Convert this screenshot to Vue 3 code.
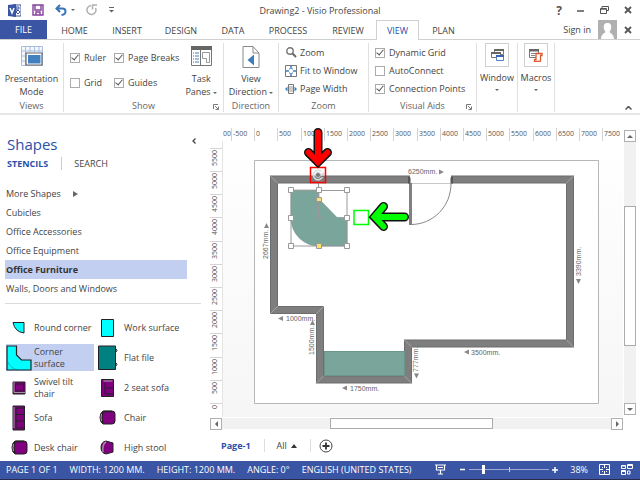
<script setup>
import { ref } from 'vue'

const tabs = [
  { name: 'HOME', w: 'w-home' },
  { name: 'INSERT', w: 'w-insert' },
  { name: 'DESIGN', w: 'w-design' },
  { name: 'DATA', w: 'w-data' },
  { name: 'PROCESS', w: 'w-process' },
  { name: 'REVIEW', w: 'w-review' },
]
const showOptions = ref([
  { id: 'ruler', label: 'Ruler', on: true },
  { id: 'breaks', label: 'Page Breaks', on: true },
  { id: 'grid', label: 'Grid', on: false },
  { id: 'guides', label: 'Guides', on: true },
])
const aids = ref([
  { id: 'dyn', label: 'Dynamic Grid', on: true },
  { id: 'auto', label: 'AutoConnect', on: false },
  { id: 'conn', label: 'Connection Points', on: true },
])
const stencils = ['More Shapes', 'Cubicles', 'Office Accessories', 'Office Equipment', 'Office Furniture', 'Walls, Doors and Windows']
const selected = ref('Office Furniture')
const masters = ['Round corner', 'Work surface', 'Corner surface', 'Flat file', 'Swivel tilt chair', '2 seat sofa', 'Sofa', 'Chair', 'Desk chair', 'High stool']
const master = ref('Corner surface')
const zoom = ref(38)

// Distance between two ruler marks (500 mm) at the current zoom level
const step = 23.2
const hRuler = Array.from({ length: 17 }, (_, i) => ({ label: String((i - 1) * 500), x: Math.round(8 + i * step) }))
const vRuler = Array.from({ length: 12 }, (_, i) => ({ label: String(i * 500), y: Math.round(262 - i * step) }))
const status = ['PAGE 1 OF 1', 'WIDTH: 1200 MM.', 'HEIGHT: 1200 MM.', 'ANGLE: 0°', 'ENGLISH (UNITED STATES)']
</script>

<template>
  <div class="app">
    <header class="titlebar">
      <div class="quick">
        <svg width="13" height="13" viewBox="0 0 13 13" aria-hidden="true">
          <path d="M5 1h8v11H5z" fill="#fff" stroke="#3955a3" />
          <path d="M8 3h3v2H8zM9 5v2M8 8l2-2 2 2-2 2z" fill="none" stroke="#3955a3" />
          <path d="M0 1l8-1v13l-8-1z" fill="#3955a3" />
          <path d="M2 4l2 5 2-5" fill="none" stroke="#fff" stroke-width="1.5" />
        </svg>
        <button class="plain" aria-label="Save">
          <svg width="12" height="12" viewBox="0 0 12 12"><path d="M1 1h10v10H1zM3 1v5h6V1M4 11V8h4v3" fill="none" stroke="#84419b" stroke-width="1.4" /></svg>
        </button>
        <button class="plain undo" aria-label="Undo">
          <svg width="20" height="12" viewBox="0 0 20 12">
            <path d="M5 1L1.500 4.500 5 8M2 4.500h5.500q3 0 3 3t-4 3.500" fill="none" stroke="#3a74b8" stroke-width="2" />
            <path d="M16 5h4l-2 2z" fill="#666" />
          </svg>
        </button>
        <button class="plain" aria-label="Repeat">
          <svg width="12" height="12" viewBox="0 0 12 12"><path d="M5 1.500A4.500 4.500 0 1 0 9.500 4M6.500 5.500V1H11" fill="none" stroke="#b0b0b0" stroke-width="1.500" /></svg>
        </button>
        <button class="plain" aria-label="Customize">
          <svg width="5" height="6" viewBox="0 0 5 6"><path d="M0 .5h5" stroke="#666" /><path d="M0 3h5L2.500 5.500z" fill="#666" /></svg>
        </button>
      </div>
      <h1>Drawing2 - Visio Professional</h1>
      <div class="winbtns">
        <button class="plain help" aria-label="Help">?</button>
        <button class="plain" aria-label="Minimize"><svg width="8" height="8" viewBox="0 0 8 8"><path d="M0 5h7" stroke="#555" stroke-width="1.500" /></svg></button>
        <button class="plain" aria-label="Restore"><svg width="9" height="8" viewBox="0 0 9 8"><path d="M.5 2.500h6v5h-6zM2 2V.5h6.500v4H7M.5 3.200h6" fill="none" stroke="#555" /></svg></button>
        <button class="plain" aria-label="Close"><svg width="8" height="8" viewBox="0 0 8 8"><path d="M1 1l6 6M7 1L1 7" stroke="#555" stroke-width="1.800" /></svg></button>
      </div>
    </header>

    <nav class="tabs">
      <button class="file">FILE</button>
      <button v-for="t in tabs" :key="t.name" class="tab" :class="t.w">{{ t.name }}</button>
      <button class="tab active">VIEW</button>
      <button class="tab w-plan">PLAN</button>
      <div class="account">
        <a href="#">Sign in</a>
        <svg width="19" height="19" viewBox="0 0 19 19" aria-hidden="true">
          <path d="M0 0h19v19H0z" fill="#b0b0b0" />
          <path d="M9.500 3c3 0 3.800 2 3.800 4.200S12 11 11.500 12c0 1 4.500 1.500 4.500 7H3c0-5.500 4.500-6 4.500-7C7 11 5.700 9.400 5.700 7.200S6.500 3 9.500 3z" fill="#fff" />
        </svg>
        <button class="plain" aria-label="Close document"><svg width="8" height="8" viewBox="0 0 8 8"><path d="M1 1l6 6M7 1L1 7" stroke="#555" stroke-width="1.800" /></svg></button>
      </div>
    </nav>

    <section class="ribbon">
      <div class="group g-views">
        <button class="big">
          <svg width="22" height="20" viewBox="0 0 22 20">
            <path d="M.5.500h21v19H.5z" fill="#f4f7fc" stroke="#a9bde0" />
            <path d="M4.500 0v20M9 0v6M13.500 0v6M18 0v6M0 5h22M0 10h5M0 15h5" fill="none" stroke="#a9bde0" />
            <path d="M5 7h16v12H5z" fill="#fff" stroke="#666" stroke-width="1.200" />
            <path d="M7 9h12.500v8.500H7z" fill="#4280c0" />
          </svg>
          <span>Presentation<br>Mode</span>
        </button>
        <h2>Views</h2>
      </div>
      <div class="group g-show">
        <div class="show-body">
          <div class="checks">
            <label v-for="o in showOptions" :key="o.id"><input v-model="o.on" type="checkbox">{{ o.label }}</label>
          </div>
          <button class="big">
            <svg width="21" height="20" viewBox="0 0 21 20">
              <path d="M.5.500h20v19H.5z" fill="#fff" stroke="#777" />
              <path d="M0 0h21v4H0z" fill="#666" />
              <path d="M9.500 4v15" stroke="#777" />
              <path d="M2 7h1M2 10h1M2 13h1M2 16h1" stroke="#666" />
              <path d="M4 7h4M4 10h4M4 13h4M4 16h4" stroke="#4280c0" />
              <path d="M11.500 6.500h7v10h-3v-4h-4z" fill="none" stroke="#999" />
            </svg>
            <span>Task<br>Panes <i class="caret"></i></span>
          </button>
        </div>
        <h2>Show</h2>
        <button class="plain launcher" aria-label="Show settings"><svg width="6" height="6" viewBox="0 0 6 6"><path d="M.5 5V.5H5M2 2l3 3M5.500 2.500v3h-3" fill="none" stroke="#777" /></svg></button>
      </div>
      <div class="group g-dir">
        <button class="big">
          <svg width="18" height="22" viewBox="0 0 18 22">
            <path d="M1 .5h10L17 7v14.500H1zM11 .5V7h6" fill="#fff" stroke="#888" />
            <path d="M12 8.500v11L5.500 14z" fill="#3f7dbd" />
          </svg>
          <span>View<br>Direction <i class="caret"></i></span>
        </button>
        <h2>Direction</h2>
      </div>
      <div class="group g-zoom">
        <div class="stack">
          <button class="row"><svg width="12" height="12" viewBox="0 0 12 12"><circle cx="5" cy="4" r="3.200" fill="#fff" stroke="#777" stroke-width="1.400" /><path d="M7.500 6.500L11 10" stroke="#666" stroke-width="2" /></svg>Zoom</button>
          <button class="row"><svg width="12" height="12" viewBox="0 0 12 12"><path d="M.5.500h11v11H.5z" fill="#fff" stroke="#777" /><path d="M6 1v3M6 8v3M1 6h3M8 6h3" stroke="#3f7dbd" stroke-width="1.500" /><path d="M4 4h1M7 4h1M4 8h1M7 8h1" stroke="#3f7dbd" /></svg>Fit to Window</button>
          <button class="row"><svg width="12" height="12" viewBox="0 0 12 12"><path d="M3.500 1.500h5v9h-5z" fill="#fff" stroke="#777" /><path d="M4 4h4M4 6h4M4 8h4" stroke="#999" /><path d="M2.500 3.500v5L0 6zM9.500 3.500v5L12 6z" fill="#3f7dbd" /></svg>Page Width</button>
        </div>
        <h2>Zoom</h2>
      </div>
      <div class="group g-aids">
        <div class="stack">
          <label v-for="o in aids" :key="o.id"><input v-model="o.on" type="checkbox">{{ o.label }}</label>
        </div>
        <h2>Visual Aids</h2>
        <button class="plain launcher" aria-label="Visual aid settings"><svg width="6" height="6" viewBox="0 0 6 6"><path d="M.5 5V.5H5M2 2l3 3M5.500 2.500v3h-3" fill="none" stroke="#777" /></svg></button>
      </div>
      <div class="group g-win">
        <button class="big boxed">
          <span class="box"><svg width="13" height="12" viewBox="0 0 13 12">
            <path d="M3.500.500h9v5h-9z" fill="#fff" stroke="#777" /><path d="M3 0h10v2H3z" fill="#666" />
            <path d="M.5 3.500h9v5h-9z" fill="#fff" stroke="#777" /><path d="M0 3h10v2H0z" fill="#666" />
            <path d="M5.500 6.500h7v5h-7z" fill="#fff" stroke="#4f81c4" /><path d="M5 6h8v2H5z" fill="#3a66b5" />
          </svg></span>
          <span>Window</span><i class="caret"></i>
        </button>
      </div>
      <div class="group g-mac">
        <button class="big boxed">
          <span class="box"><svg width="14" height="13" viewBox="0 0 14 13">
            <path d="M.5.500h9v8h-9z" fill="#fff" stroke="#777" /><path d="M0 0h10v2.500H0z" fill="#666" /><path d="M2 4.500h6M2 6.500h4" stroke="#888" />
            <path d="M7 4.500h6v2h-1.500v5q0 1-1 1h-5v-2h1.500z" fill="#fff" stroke="#e0552b" stroke-width="1.300" />
          </svg></span>
          <span>Macros</span><i class="caret"></i>
        </button>
      </div>
      <button class="plain collapse" aria-label="Collapse the ribbon"><svg width="7" height="4" viewBox="0 0 7 4"><path d="M.5 3.500l3-3 3 3" fill="none" stroke="#555" stroke-width="1.500" /></svg></button>
    </section>

    <main class="body">
      <aside class="shapes">
        <div class="shapes-head">
          <h2>Shapes</h2>
          <button class="plain" aria-label="Collapse pane"><svg width="4" height="6" viewBox="0 0 4 6"><path d="M3.500.500L1 3l2.500 2.500" fill="none" stroke="#444" stroke-width="1.300" /></svg></button>
        </div>
        <div class="modes">
          <button class="plain on">STENCILS</button>
          <button class="plain">SEARCH</button>
        </div>
        <ul class="stencils">
          <li v-for="s in stencils" :key="s">
            <button :class="{ sel: s === selected }" @click="selected = s">{{ s }}<i v-if="s === 'More Shapes'" class="more"></i></button>
          </li>
        </ul>
        <div class="masters">
          <button v-for="(m, i) in masters" :key="m" :class="{ sel: m === master }" @click="master = m">
            <svg width="26" height="26" viewBox="0 0 26 26" aria-hidden="true">
              <path v-if="i === 0" d="M7 7.500h11v10.500q-9-1-11-10.500z" fill="#0ff" stroke="#222" />
              <path v-if="i === 1" d="M5.500 4.500h12v17h-12z" fill="#0ff" stroke="#222" />
              <g v-if="i === 2"><path d="M1 1h9.500v9l5 5h9.500v10H1z" fill="#0ff" stroke="#222" stroke-width="1.200" /><path d="M1 14q2 9 11 11" fill="none" stroke="#078" stroke-dasharray="1 1" /></g>
              <g v-if="i === 3"><path d="M2.500 1h17v23.500h-17z" fill="#008080" stroke="#222" /><path d="M20 4q2 1 0 3M20 18q2 1 0 3" fill="none" stroke="#222" /></g>
              <g v-if="i === 4"><path d="M7 7h12v12H7z" fill="#800080" stroke="#222" /><path d="M8 7v10.500H19" fill="none" stroke="#999" /><path d="M9.500 9h8v7h-8z" fill="#800080" stroke="#222" /></g>
              <g v-if="i === 5"><path d="M5.500 4.500h12v17h-12z" fill="#800080" stroke="#222" /><path d="M7.500 6h9" stroke="#aaa" /><path d="M9 8v11M9.500 13h8M9.500 19h8" fill="none" stroke="#222" /></g>
              <g v-if="i === 6"><path d="M7 1h11.500v24H7z" fill="#800080" stroke="#222" /><path d="M8 2v21" stroke="#999" /><path d="M10 3v20M10 9.500h8M10 16h8M10 23h8M10 3h8" fill="none" stroke="#222" /></g>
              <g v-if="i === 7 || i === 8" :transform="i === 7 ? 'translate(-2 0)' : ''"><path d="M9 6h9q3 0 3 3v7q0 3-3 3H9q-3-2-3-6.500T9 6z" fill="#800080" stroke="#222" /><path d="M9 6.500q-2 6 0 12M10 6.500h8" fill="none" stroke="#222" stroke-width="1.400" /><path d="M7.500 9q-1 4 0 7" fill="none" stroke="#aaa" /></g>
              <g v-if="i === 9" transform="translate(-2 0)"><path d="M12 6l7 2v9l-7 2q-5-1-5-6.500T12 6z" fill="#800080" stroke="#222" /><path d="M12 7q-4 2-3 10" fill="none" stroke="#999" stroke-width="1.500" /></g>
            </svg>
            <span>{{ m }}</span>
          </button>
        </div>
      </aside>

      <section class="work">
        <svg class="hruler" viewBox="0 0 400 14" preserveAspectRatio="xMinYMin meet" aria-label="Horizontal ruler">
          <path d="M0 13.500h400" stroke="#ddd" />
          <text x="0" y="8">00</text>
          <g v-for="t in hRuler" :key="t.label"><path :d="`M${t.x}.5 0v13`" stroke="#d4d4d4" /><text :x="t.x + 2" y="8">{{ t.label }}</text></g>
        </svg>
        <svg class="vruler" viewBox="0 0 13 276" aria-label="Vertical ruler">
          <path d="M12.500 0v276" stroke="#e4e4e4" />
          <g v-for="t in vRuler" :key="t.label"><path :d="`M0 ${t.y}.5h12`" stroke="#d4d4d4" /><text :transform="`translate(7 ${t.y + 2}) rotate(-90)`" text-anchor="end">{{ t.label }}</text></g>
        </svg>
        <svg class="canvas" viewBox="223 141 400 276" preserveAspectRatio="xMinYMin meet" role="img" aria-label="Floor plan">
          <path d="M254.500 160.500h344v243h-344z" fill="#fff" stroke="#b4b6ba" />
          <path d="M410 183.500h41" stroke="#c8c8c8" />
          <g fill="none">
            <path d="M410 179.500H274V310h46v69.500h88v-36h162v-164H451" stroke="#6d6d6d" stroke-width="8" />
            <path d="M410 179.500H274V310h46v69.500h88v-36h162v-164H451" stroke="#7e7e7e" stroke-width="6" />
            <path d="M270 175.500l8 8M574 175.500l-8 8M270 314l8-8M316 314l8-8M316 383.500l8-8M412 383.500l-8-8M404 339.500l8 8M574 347.500l-8-8" stroke="#b5b5b5" stroke-width=".7" />
            <path d="M410.500 183v42" stroke="#808080" stroke-width="3" />
            <path d="M411 224.500c22 0 40-18 40-41" stroke="#888" />
          </g>
          <path d="M408 176.500q3 0 2.500 3v4H408zM453 176.500q-3 0-2.500 3v4h2.500z" fill="#555" />
          <path d="M324 351h81v25h-81z" fill="#7aa59b" />
          <path d="M324 351.500h81M404.500 352v24M324.500 352v24M324 375.500h81" stroke="#6b968c" />
          <path d="M291 190h28v9l18 18.500h10V246h-28c-16 0-28-13-28-28z" fill="#7aa59b" stroke="#6d9389" stroke-width=".6" />
          <g stroke="#999" fill="none">
            <path d="M291 190.500h56V246h-56z" />
            <path d="M318.500 183v34" /><circle cx="318.500" cy="217.500" r="2" />
          </g>
          <g fill="#fff" stroke="#999">
            <path d="M288.500 187.500h5v5h-5zM316.500 187.500h5v5h-5zM344.500 187.500h5v5h-5zM288.500 215.500h5v5h-5zM344.500 215.500h5v5h-5zM288.500 243.500h5v5h-5zM344.500 243.500h5v5h-5z" />
            <path d="M316.500 197.500h5v4h-5zM316.500 243.500h5v5h-5z" fill="#fbe26a" />
          </g>
          <path d="M321.500 171.500a4.800 4.800 0 1 0 1 5.500" fill="none" stroke="#ddd" stroke-width="1.500" />
          <path d="M319.500 175.500h4.500v-4z" fill="#ddd" />
          <circle cx="318" cy="175" r="2.500" fill="#777" stroke="#ccc" />
          <path d="M310.500 167.500h15v15h-15z" fill="none" stroke="#f00" stroke-width="1.500" />
          <path d="M354 210.500h14.500v14H354z" fill="#fff" stroke="#0f0" stroke-width="1.500" />
          <g class="dims">
            <text x="408" y="174">6250mm.</text><path d="M439 169.500v5l5-2.500z" />
            <text x="286" y="321">1000mm.</text><path d="M283 316v5l-5-2.500z" />
            <text x="350" y="391">1750mm.</text><path d="M347 385.500v5l-5-2.500z" />
            <text x="471" y="355">3500mm.</text><path d="M469 349.500v5l-5-2.500z" />
            <text transform="translate(268 259) rotate(-90)">2667mm.</text><path d="M264 228h5l-2.500-5z" />
            <text transform="translate(314 355) rotate(-90)">1500mm.</text><path d="M310 325h5l-2.500-5z" />
            <text transform="translate(418 372) rotate(-90)">777mm.</text><path d="M414 373.500h5l-2.500 5z" />
            <text transform="translate(581 276) rotate(-90)">3390mm.</text><path d="M576 279h5l-2.500 5z" />
          </g>
          <g class="arrow">
            <path class="outer" d="M318 132.500V160M308.500 152.500l9.500 9.500 9.500-9.500" />
            <path class="red" d="M318 132.500V160M308.500 152.500l9.500 9.500 9.500-9.500" />
            <path class="outer" d="M404.500 217H376M383.500 206.500L374.500 217l9 9.500" />
            <path class="green" d="M404.500 217H376M383.500 206.500L374.500 217l9 9.500" />
          </g>
        </svg>
        <div class="vscroll">
          <button aria-label="Scroll up"><i class="tri up"></i></button>
          <div class="trough"><div class="thumb"></div></div>
          <button aria-label="Scroll down"><i class="tri down"></i></button>
        </div>
        <div class="hscroll">
          <button aria-label="Scroll left"><i class="tri left"></i></button>
          <div class="trough"><div class="thumb"></div></div>
          <button aria-label="Scroll right"><i class="tri right"></i></button>
        </div>
        <div class="pages">
          <button class="plain current">Page-1</button>
          <button class="plain all">All <i class="tri up wide"></i></button>
          <button class="plain add" aria-label="Insert page"><svg width="14" height="14" viewBox="0 0 14 14"><circle cx="7" cy="7" r="6" fill="#fff" stroke="#444" /><path d="M7 3.500v7M3.500 7h7" stroke="#333" stroke-width="1.800" /></svg></button>
        </div>
      </section>
    </main>

    <footer class="status">
      <span v-for="s in status" :key="s">{{ s }}</span>
      <div class="zoombar">
        <button class="plain present" aria-label="Presentation mode"><svg width="11" height="11" viewBox="0 0 11 11"><path d="M0 1h11M1.500 1v5h8V1M3 3.500h5M5.500 6v4M3 10h5" fill="none" stroke="#fff" stroke-width="1.200" /></svg></button>
        <button class="plain" aria-label="Zoom out"><svg width="5" height="5" viewBox="0 0 5 5"><path d="M0 2.500h5" stroke="#fff" stroke-width="1.500" /></svg></button>
        <input v-model="zoom" type="range" min="1" max="230" aria-label="Zoom level">
        <button class="plain" aria-label="Zoom in"><svg width="6" height="6" viewBox="0 0 6 6"><path d="M0 3h6M3 0v6" stroke="#fff" stroke-width="1.500" /></svg></button>
        <button class="plain pct">{{ zoom }}%</button>
        <button class="plain" aria-label="Fit page"><svg width="11" height="11" viewBox="0 0 11 11"><path d="M.5.500h10v10H.5zM5.500 1v3M5.500 7v3M1 5.500h3M7 5.500h3M3 3l1 1M8 3L7 4M3 8l1-1M8 8L7 7" fill="none" stroke="#fff" /></svg></button>
        <button class="plain" aria-label="Switch windows"><svg width="12" height="11" viewBox="0 0 12 11"><path d="M.5 1.500h4v3h-4zM6.500.500h5v4h-5zM.5 6.500h4v4h-4zM6.500 10v-3H9v3zM.5 2h4M6.500 1.500h5M.5 7.500h4" fill="none" stroke="#fff" /></svg></button>
      </div>
    </footer>
  </div>
</template>

<style>
body { margin: 0; background: #fff; }
</style>

<style scoped>
.app { display: flex; flex-direction: column; min-height: 100vh; background: #fff; color: #444; font: 9px/13px "Open Sans", "Noto Sans", sans-serif; overflow: hidden; }
* { box-sizing: border-box; }
button { font: inherit; color: inherit; background: none; border: 0; padding: 0; }
h1, h2, ul { margin: 0; padding: 0; font: inherit; list-style: none; }
svg { display: block; flex: none; }
.plain { display: flex; align-items: center; }

.titlebar { display: grid; grid-template-columns: 1fr auto 1fr; align-items: center; height: 20px; padding: 0 8px; }
.quick { display: flex; align-items: center; gap: 11px; }
.winbtns { display: flex; justify-content: flex-end; align-items: center; gap: 15px; }
.help { font-size: 12px; font-weight: 700; color: #555; }

.tabs { display: flex; align-items: stretch; height: 20px; border-bottom: 1px solid #d0d0d0; }
.file { width: 47px; background: #3955a3; color: #fff; }
.tab { border: 1px solid transparent; border-bottom: 0; padding: 0; white-space: nowrap; }
.w-home { width: 55px; }
.w-insert { width: 50px; }
.w-design { width: 58px; }
.w-data { width: 46px; }
.w-process { width: 64px; }
.w-review { width: 56px; }
.w-plan { width: 49px; }
.active { width: 43px; margin-bottom: -1px; background: #fff; border-color: #d0d0d0; color: #2b4fb0; }
.account { display: flex; align-items: center; gap: 7px; margin-left: auto; padding-right: 8px; }
.account a { color: inherit; text-decoration: none; }

.ribbon { display: flex; height: 75px; padding: 3px 0 1px; border-bottom: 2px solid #e6e6e6; }
.group { position: relative; display: flex; flex-direction: column; border-right: 1px solid #e0e0e0; padding-top: 3px; }
.group h2 { margin-top: auto; height: 12px; line-height: 12px; text-align: center; color: #666; }
.g-views { width: 64px; }
.g-show { width: 160px; }
.g-dir { width: 55px; }
.g-zoom { width: 90px; }
.g-aids { width: 108px; }
.g-win { width: 41px; }
.g-mac { width: 37px; }
.big { display: flex; flex-direction: column; align-items: center; gap: 6px; }
.big span { line-height: 13px; white-space: nowrap; }
.g-dir .big { gap: 4px; }
.caret { display: inline-block; border: 2px solid transparent; border-top-color: #666; border-bottom: 0; vertical-align: middle; }
.show-body { display: flex; justify-content: space-between; padding: 0 6px; }
.checks { display: grid; grid-template-columns: 44px auto; row-gap: 12px; align-content: start; padding-top: 5px; }
.stack { display: flex; flex-direction: column; gap: 5px; padding-left: 6px; }
.row { display: flex; align-items: center; gap: 3px; height: 13px; }
label { display: flex; align-items: center; gap: 4px; height: 13px; white-space: nowrap; }
label input { appearance: none; width: 10px; height: 10px; margin: 0; border: 1px solid #ababab; background: #fff; display: grid; place-content: center; }
label input:checked::after { content: ""; width: 3px; height: 6px; border: solid #555; border-width: 0 1px 1px 0; transform: rotate(40deg); margin-bottom: 2px; }
.launcher { position: absolute; right: 4px; bottom: 2px; }
.g-win, .g-mac { padding-top: 0; }
.boxed { gap: 4px; }
.box { display: grid; place-content: center; width: 24px; height: 24px; border: 1px solid #d0d0d0; }
.boxed .caret { margin-top: 1px; }
.collapse { margin: auto 8px 2px auto; }

.body { display: flex; flex: 1; }
.shapes { width: 202px; padding: 18px 1px 0 5px; flex: none; }
.shapes-head { display: flex; justify-content: space-between; padding: 0 5px 0 2px; height: 22px; }
.shapes-head h2 { font-size: 15px; line-height: 22px; color: #2b4fa8; }
.shapes-head button { align-self: flex-start; padding-top: 5px; }
.modes { display: flex; height: 17px; padding-left: 2px; align-items: center; }
.modes .on { color: #2b4fa8; font-weight: 700; padding-right: 13px; border-right: 1px solid #ccc; margin-right: 12px; }
.stencils { padding: 12px 0 5px; border-bottom: 1px solid #dcdcdc; }
.stencils button { display: flex; align-items: center; width: 182px; height: 19px; padding-left: 1px; }
.stencils .sel, .masters .sel { background: #c3cff1; }
.stencils .sel { font-weight: 700; color: #333; }
.more { border: 3px solid transparent; border-left: 5px solid #666; border-right: 0; margin-left: 12px; }
.masters { display: grid; grid-template-columns: 88px 88px; column-gap: 2px; row-gap: 3px; padding: 10px 0 0 1px; }
.masters button { display: flex; align-items: center; gap: 2px; height: 27px; text-align: left; line-height: 12px; }
.masters button:nth-child(3) span, .masters button:nth-child(5) span { max-width: 44px; }

.work { flex: 1; min-width: 0; display: grid; grid-template-columns: 13px 1fr 13px; grid-template-rows: 13px auto 12px auto; align-content: start; padding: 13px 4px 0 8px; }
.hruler { grid-column: 2; grid-row: 1; width: 100%; height: auto; }
.vruler { grid-column: 1; grid-row: 2; width: 100%; height: 100%; }
.hruler text, .vruler text { font: 7px "Open Sans", sans-serif; fill: #555; }
.canvas { grid-column: 2; grid-row: 2; width: 100%; overflow: visible; background: linear-gradient(#fff, #f6f6f6); }
.dims text { font: 7px "Liberation Sans", sans-serif; fill: #666; }
.dims path { fill: #888; }
.arrow path { fill: none; stroke-linecap: round; }
.arrow .outer { stroke: #111; stroke-width: 9px; }
.arrow .red { stroke: #f00; stroke-width: 6px; }
.arrow .green { stroke: #0f0; stroke-width: 6px; }
.vscroll { grid-column: 3; grid-row: 1 / 3; padding: 2px 0 2px 1px; display: flex; flex-direction: column; }
.hscroll { grid-column: 1 / 3; grid-row: 3; display: flex; margin-top: 1px; }
.vscroll button, .hscroll button { flex: none; display: grid; place-content: center; width: 12px; height: 12px; border: 1px solid #b0b0b0; background: #fff; }
.trough { flex: 1; background: #f1f1f1; display: flex; }
.vscroll .trough { flex-direction: column; padding-top: 64px; }
.hscroll .trough { padding-left: 108px; }
.thumb { background: #fff; border: 1px solid #ababab; }
.vscroll .thumb { height: 71%; }
.hscroll .thumb { width: 58%; }
.tri { display: inline-block; border: 3px solid transparent; }
.up { border-bottom: 3px solid #666; border-top: 0; }
.down { border-top: 3px solid #666; border-bottom: 0; }
.left { border-right: 3px solid #666; border-left: 0; }
.right { border-left: 3px solid #666; border-right: 0; }
.wide { border-bottom-color: #333; border-bottom-width: 4px; margin-left: 4px; }
.pages { grid-column: 1 / 4; grid-row: 4; display: flex; align-items: center; height: 31px; padding: 2px 0 0 11px; }
.pages button { height: 13px; }
.pages .current { color: #2b4fa8; font-weight: 700; padding-right: 13px; border-right: 1px solid #ddd; }
.pages .all { padding: 0 13px 0 12px; border-right: 1px solid #ddd; }
.pages .add { padding-left: 8px; }

.status { display: flex; align-items: center; gap: 12px; height: 19px; padding: 0 7px 1px 6px; background: #3955a3; border-bottom: 1px solid #2a2a4a; color: #fff; white-space: nowrap; }
.zoombar { display: flex; align-items: center; margin-left: auto; }
.present { margin-right: 14px; }
.zoombar input { appearance: none; width: 80px; height: 9px; margin: 0 3px 0 4px; background: linear-gradient(#c9d1ea, #c9d1ea) center / 1px 5px no-repeat, linear-gradient(#9eaad4, #9eaad4) center / 100% 1px no-repeat; }
.zoombar input::-webkit-slider-thumb { appearance: none; width: 3px; height: 9px; background: #fff; }
.pct { margin: 0 11px 0 12px; }
.pct + button { margin-right: 11px; }
</style>
